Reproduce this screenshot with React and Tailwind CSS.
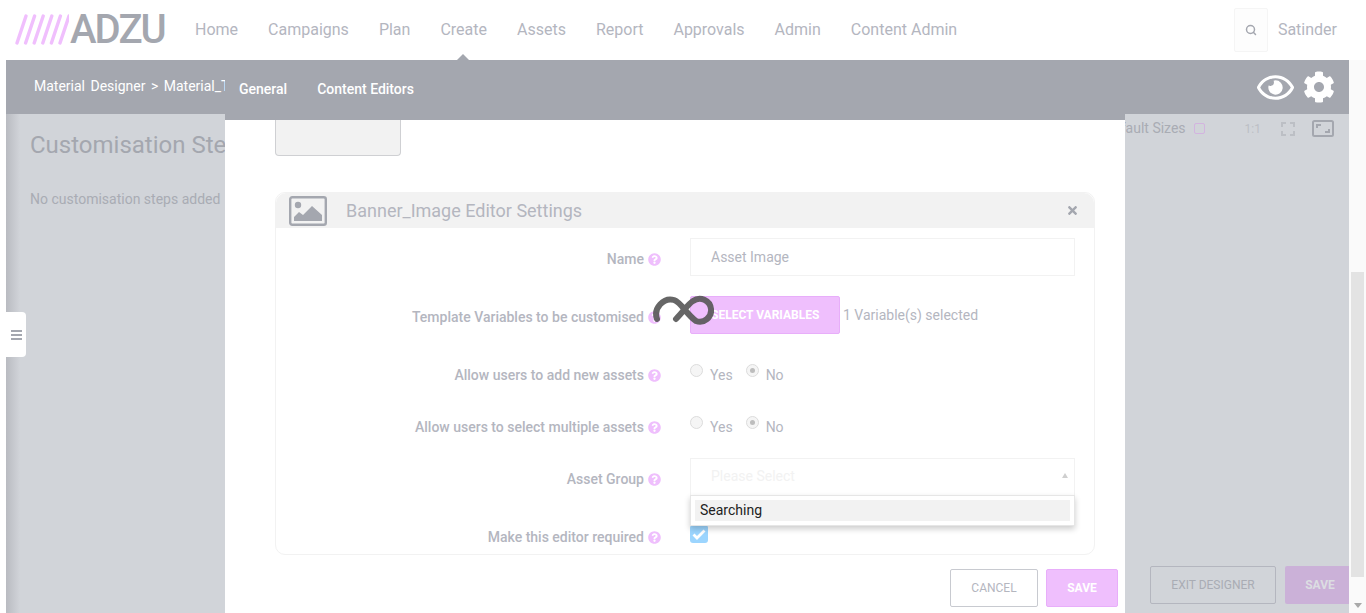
import { Search } from 'lucide-react';
import { FaRegEye, FaCog, FaQuestionCircle, FaTimes } from 'react-icons/fa';

const navItems = ['Home', 'Campaigns', 'Plan', 'Create', 'Assets', 'Report', 'Approvals', 'Admin', 'Content Admin'];

function Logo() {
  return (
    <div className="flex w-[150px] shrink-0 items-center">
      <svg width="54" height="32" viewBox="0 0 54 32" className="shrink-0">
        {[0, 1, 2, 3, 4, 5].map((i) => (
          <line key={i} x1={2 + i * 8.6} y1="29" x2={11 + i * 8.6} y2="2" stroke="#f0bffd" strokeWidth="3.4" strokeLinecap="round" />
        ))}
      </svg>
      <span className="ml-[1px] text-[40px] font-medium leading-none tracking-[-1.9px] text-[#a4a7af]">ADZU</span>
    </div>
  );
}

function Field({ label, children, className }) {
  return (
    <div className={`flex ${className}`}>
      <div className="flex w-[385px] shrink-0 items-start justify-end gap-[4px] text-[14px] font-medium text-[#b4b6bf]">
        <span>{label}</span>
        <FaQuestionCircle className="mt-[4px] text-[13px] text-[#efbffd]" />
      </div>
      <div className="ml-[29px] flex-1">{children}</div>
    </div>
  );
}

function Radio({ label, checked }) {
  return (
    <span className="mr-[13px] inline-flex items-start">
      <span className="mt-[-1px] flex h-[13px] w-[13px] items-center justify-center rounded-full border border-[#dcdcdc] bg-[#f5f5f5]">
        {checked && <span className="h-[5px] w-[5px] rounded-full bg-[#bdbdbd]" />}
      </span>
      <span className="ml-[7px] text-[14px] leading-[20px] text-[#b4b6bf]">{label}</span>
    </span>
  );
}

function YesNo() {
  return (
    <div className="flex">
      <Radio label="Yes" />
      <Radio label="No" checked />
    </div>
  );
}

export default function App() {
  return (
    <div className="relative h-[613px] overflow-hidden bg-white font-['Roboto',sans-serif]">
      <header className="flex h-[60px] items-center pl-[15px] pr-[29px]">
        <Logo />
        <nav className="ml-[30px] flex gap-[30px] text-[16px] text-[#b4b6bf]">
          {navItems.map((item) => (
            <span key={item}>{item}</span>
          ))}
        </nav>
        <div className="ml-auto flex items-center">
          <div className="flex h-[44px] w-[34px] items-center justify-center rounded-[2px] border border-[#f5f5f5] bg-[#fdfdfd]">
            <Search size={12} strokeWidth={3} className="text-[#a4a7af]" />
          </div>
          <span className="ml-[10px] text-[16px] text-[#b4b6bf]">Satinder</span>
        </div>
      </header>

      {/* page behind the modal */}
      <div className="ml-[6px] flex h-[553px]">
        <div className="relative flex flex-1 flex-col bg-[#d1d4d9]">
          <div className="flex h-[54px] shrink-0 items-center bg-[#a4a7af] pl-[28px] pr-[14px] text-[14px] text-white">
            <span className="-mt-[2px] whitespace-nowrap [word-spacing:2px]">Material Designer &gt; Material_T</span>
            <div className="ml-auto flex items-center gap-[9px]">
              <FaRegEye className="text-[37px]" />
              <FaCog className="text-[32px]" />
            </div>
          </div>
          <div className="absolute bottom-0 left-0 top-[54px] w-[14px] bg-linear-to-r from-[#b9bbc1] to-transparent" />
          <div className="flex items-start justify-between pl-[24px] pr-[15px] pt-[16px]">
            <div>
              <div className="text-[24px] leading-[30px] text-[#a4a7af]">Customisation Steps</div>
              <div className="mt-[29px] text-[14px] text-[#a9acb4]">No customisation steps added</div>
            </div>
            <div className="-mt-[12px] flex items-center text-[14px] text-[#a9acb4]">
              <span>Default Sizes</span>
              <span className="ml-[8px] h-[11px] w-[11px] rounded-[2px] border border-[#d3b4e0]" />
              <span className="ml-[40px] text-[12px] text-[#bcbfc5]">1:1</span>
              <svg width="14" height="14" viewBox="0 0 14 14" className="ml-[20px]" fill="none" stroke="#bcbfc5" strokeWidth="2">
                <path d="M1 5V1h4M9 1h4v4M13 9v4H9M5 13H1V9" />
              </svg>
              <svg width="22" height="17" viewBox="0 0 22 17" className="ml-[17px]" fill="none" stroke="#a4a7af" strokeWidth="2">
                <rect x="1" y="1" width="20" height="15" rx="1.5" />
                <path d="M5 8V5h4M17 9v3h-4" />
              </svg>
            </div>
          </div>
          <div className="mt-auto flex justify-end gap-[9px] pb-[9px]">
            <div className="flex h-[38px] w-[126px] items-center justify-center rounded-[2px] border border-[#b4b6bf] text-[12px] text-[#a9acb4]">EXIT DESIGNER</div>
            <div className="flex h-[38px] w-[64px] items-center justify-center rounded-l-[2px] bg-[#cbb1d8] pl-[6px] text-[12px] font-bold text-[#dcdde2]">SAVE</div>
          </div>
          <div className="absolute left-0 top-[252px] flex h-[45px] w-[20px] items-center justify-center rounded-r-[4px] bg-white">
            <span className="flex flex-col gap-[2px]">
              <span className="h-[2px] w-[11px] bg-[#a4a7af]" />
              <span className="h-[2px] w-[11px] bg-[#a4a7af]" />
              <span className="h-[2px] w-[11px] bg-[#a4a7af]" />
            </span>
          </div>
        </div>
        <div className="flex w-[17px] shrink-0 flex-col items-center justify-end bg-[#fafafa] pb-[5px]">
          <div className="mb-[26px] h-[305px] w-[13px] bg-[#e3e3e3]" />
          <div className="h-0 w-0 border-x-[4px] border-t-[5px] border-x-transparent border-t-[#a9a9a9]" />
        </div>
      </div>

      {/* create arrow */}
      <div className="absolute left-[457px] top-[54px] h-0 w-0 border-x-[6px] border-b-[6px] border-x-transparent border-b-[#a4a7af]" />

      {/* modal */}
      <div className="absolute bottom-0 left-[225px] top-[60px] flex w-[900px] flex-col bg-white">
        <div className="flex h-[60px] shrink-0 items-center gap-[30px] bg-[#a4a7af] pb-[2px] pl-[14px] text-[14px] font-medium text-white">
          <span>General</span>
          <span>Content Editors</span>
        </div>
        <div className="flex-1 px-[50px]">
          <div className="h-[36px] w-[126px] rounded-b-[4px] border border-t-0 border-[#cfd0d3] bg-[#f2f2f2]" />
          <div className="mt-[36px] h-[363px] w-[820px] rounded-[10px] border border-[#f2f2f2]">
            <div className="flex h-[35px] items-center rounded-t-[10px] bg-[#f2f2f2] pl-[13px] pr-[15px]">
              <svg width="38" height="30" viewBox="0 0 38 30" className="shrink-0">
                <rect x="1.2" y="1.2" width="35.6" height="27.6" rx="2" fill="none" stroke="#a4a7af" strokeWidth="2.4" />
                <circle cx="9" cy="9" r="3.2" fill="#a4a7af" />
                <path d="M5 25v-4l5-5 4 3 9-9 10 9v6z" fill="#a4a7af" />
              </svg>
              <span className="ml-[19px] text-[18px] text-[#b4b6bf]">Banner_Image Editor Settings</span>
              <FaTimes className="ml-auto text-[13px] text-[#a4a7af]" />
            </div>
            <div className="pr-[19px] pt-[10px]">
              <Field label="Name" className="pt-[11px]">
                <div className="-mt-[11px] flex h-[38px] items-center border border-[#f2f2f2] pl-[20px] text-[14px] text-[#b4b6bf]">Asset Image</div>
              </Field>
              <Field label="Template Variables to be customised" className="mt-[31px]">
                <div className="-mt-[11px] flex items-center">
                  <div className="flex h-[38px] w-[150px] items-center rounded-[2px] border border-[#e8aefa] bg-[#efbffd] pl-[20px] text-[12px] font-bold text-white">SELECT VARIABLES</div>
                  <span className="ml-[3px] text-[14px] text-[#b4b6bf]">1 Variable(s) selected</span>
                </div>
              </Field>
              <Field label="Allow users to add new assets" className="mt-[31px]">
                <YesNo />
              </Field>
              <Field label="Allow users to select multiple assets" className="mt-[31px]">
                <YesNo />
              </Field>
              <Field label="Asset Group" className="mt-[31px]">
                <div className="relative -mt-[11px] flex h-[38px] items-center border border-[#f2f2f2] pb-[2px] pl-[20px] text-[14px] text-[#f2f2f2]">
                  Please Select
                  <span className="absolute right-[6px] top-[14px] h-0 w-0 border-x-[3px] border-b-[5px] border-x-transparent border-b-[#cfcfcf]" />
                  <div className="absolute left-[-1px] right-[-1px] top-[36px] z-10 border border-[#e6e6e6] bg-white p-[4px] text-[14px] text-[#222] shadow-[0_3px_6px_rgba(0,0,0,0.2)]">
                    <div className="flex h-[21px] items-center bg-[#f2f2f2] pl-[5px]">Searching</div>
                  </div>
                </div>
              </Field>
              <Field label="Make this editor required" className="mt-[31px]">
                <div className="-mt-[2px] flex h-[18px] w-[18px] items-center justify-center rounded-[3px] bg-[#9cd5fe]">
                  <svg width="14" height="11" viewBox="0 0 14 11" fill="none" stroke="white" strokeWidth="2.8">
                    <path d="M1.5 5.5 5 9 12.5 1.5" />
                  </svg>
                </div>
              </Field>
            </div>
          </div>
        </div>
        <div className="flex justify-end gap-[8px] pb-[6px] pr-[7px]">
          <div className="flex h-[38px] w-[88px] items-center justify-center rounded-[2px] border border-[#c8cad0] text-[12px] text-[#b4b6bf]">CANCEL</div>
          <div className="flex h-[38px] w-[72px] items-center justify-center rounded-[2px] border border-[#e8aefa] bg-[#efbffd] text-[12px] font-bold text-white">SAVE</div>
        </div>
      </div>

      {/* loading spinner */}
      <svg width="62" height="32" viewBox="0 0 62 32" fill="none" className="absolute left-[652px] top-[294px]">
        <path d="M5 25C1 14 12 3 22 6c8 3 12 14 22 21 8 3 16-4 15-12-1-9-11-13-18-8-5 3-10 11-17 18" stroke="#555" strokeOpacity="0.9" strokeWidth="6" strokeLinecap="round" />
      </svg>
    </div>
  );
}
